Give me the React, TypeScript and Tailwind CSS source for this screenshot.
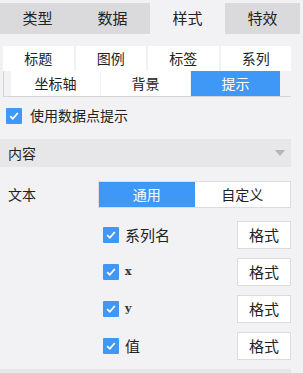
const font = { fontFamily: '"Noto Sans CJK SC", "Noto Sans", sans-serif' };

const topTabs = ["类型", "数据", "样式", "特效"];
const subRow1 = ["标题", "图例", "标签", "系列"];
const subRow2 = ["坐标轴", "背景", "提示"];

function Check() {
  return (
    <span className="w-4 h-4 bg-[#3f98f5] rounded-[1px] flex items-center justify-center shrink-0">
      <svg width="12" height="12" viewBox="0 0 12 12">
        <path d="M2.2 6.2 L4.8 8.8 L9.8 3" stroke="white" strokeWidth="1.8" fill="none" />
      </svg>
    </span>
  );
}

const items = [
  { label: "系列名", latin: false },
  { label: "x", latin: true },
  { label: "y", latin: true },
  { label: "值", latin: false },
];

export default function App() {
  return (
    <div className="w-[303px] h-[373px] bg-[#f2f2f5] text-[#222] overflow-hidden pt-[3px]" style={font}>
      <div className="flex h-[31px] w-[300px] text-[15px]">
        {topTabs.map((t, i) => (
          <div
            key={t}
            className={`flex-1 flex items-center justify-center ${i === 2 ? "bg-[#f2f2f5]" : "bg-[#dadadd]"}`}
          >
            {t}
          </div>
        ))}
      </div>

      <div className="w-[291px] pl-[3px] mt-[12px] text-[14px]">
        <div className="grid grid-cols-4 gap-[2px] h-[25px]">
          {subRow1.map((t) => (
            <div key={t} className="bg-white flex items-center justify-center">
              {t}
            </div>
          ))}
        </div>
        <div className="flex h-[26px] border-l border-b border-[#d4d4d8] pl-[7px]">
          {subRow2.map((t, i) => (
            <div
              key={t}
              className={`w-[89px] mr-px flex items-center justify-center ${i === 2 ? "bg-[#3f98f5] text-white" : "bg-white"}`}
            >
              {t}
            </div>
          ))}
        </div>
      </div>

      <div className="flex items-center gap-2 pl-[6px] mt-[10px] h-[17px] text-[14px]">
        <Check />
        <span>使用数据点提示</span>
      </div>

      <div className="w-[291px] h-[28px] mt-[15px] bg-[#e7e7ea] flex items-center justify-between pl-[8px] pr-[6px] text-[14px]">
        <span>内容</span>
        <svg width="10" height="6" viewBox="0 0 10 6">
          <path d="M0 0 L10 0 L5 6 Z" fill="#b4b4b8" />
        </svg>
      </div>

      <div className="w-[291px] flex items-center mt-[14px] h-[27px] text-[14px]">
        <span className="w-[98px] pl-[8px]">文本</span>
        <div className="flex-1 flex h-full border border-[#dcdcdf]">
          <div className="flex-1 bg-[#3f98f5] text-white flex items-center justify-center">通用</div>
          <div className="flex-1 bg-white flex items-center justify-center">自定义</div>
        </div>
      </div>

      <div className="w-[291px] pl-[103px] mt-[13px] flex flex-col gap-[9px] text-[15px]">
        {items.map((it) => (
          <div key={it.label} className="flex items-center h-[28px]">
            <Check />
            <span
              className={`ml-[6px] flex-1 ${it.latin ? "text-[11px] font-bold text-[#333]" : ""}`}
              style={it.latin ? { fontFamily: '"DejaVu Serif", serif' } : undefined}
            >
              {it.label}
            </span>
            <div className="w-[54px] h-[28px] bg-white border border-[#dcdcdf] flex items-center justify-center text-[15px]">
              格式
            </div>
          </div>
        ))}
      </div>

      <div className="w-[291px] h-[8px] mt-[9px] bg-[#e7e7ea]" />
    </div>
  );
}
